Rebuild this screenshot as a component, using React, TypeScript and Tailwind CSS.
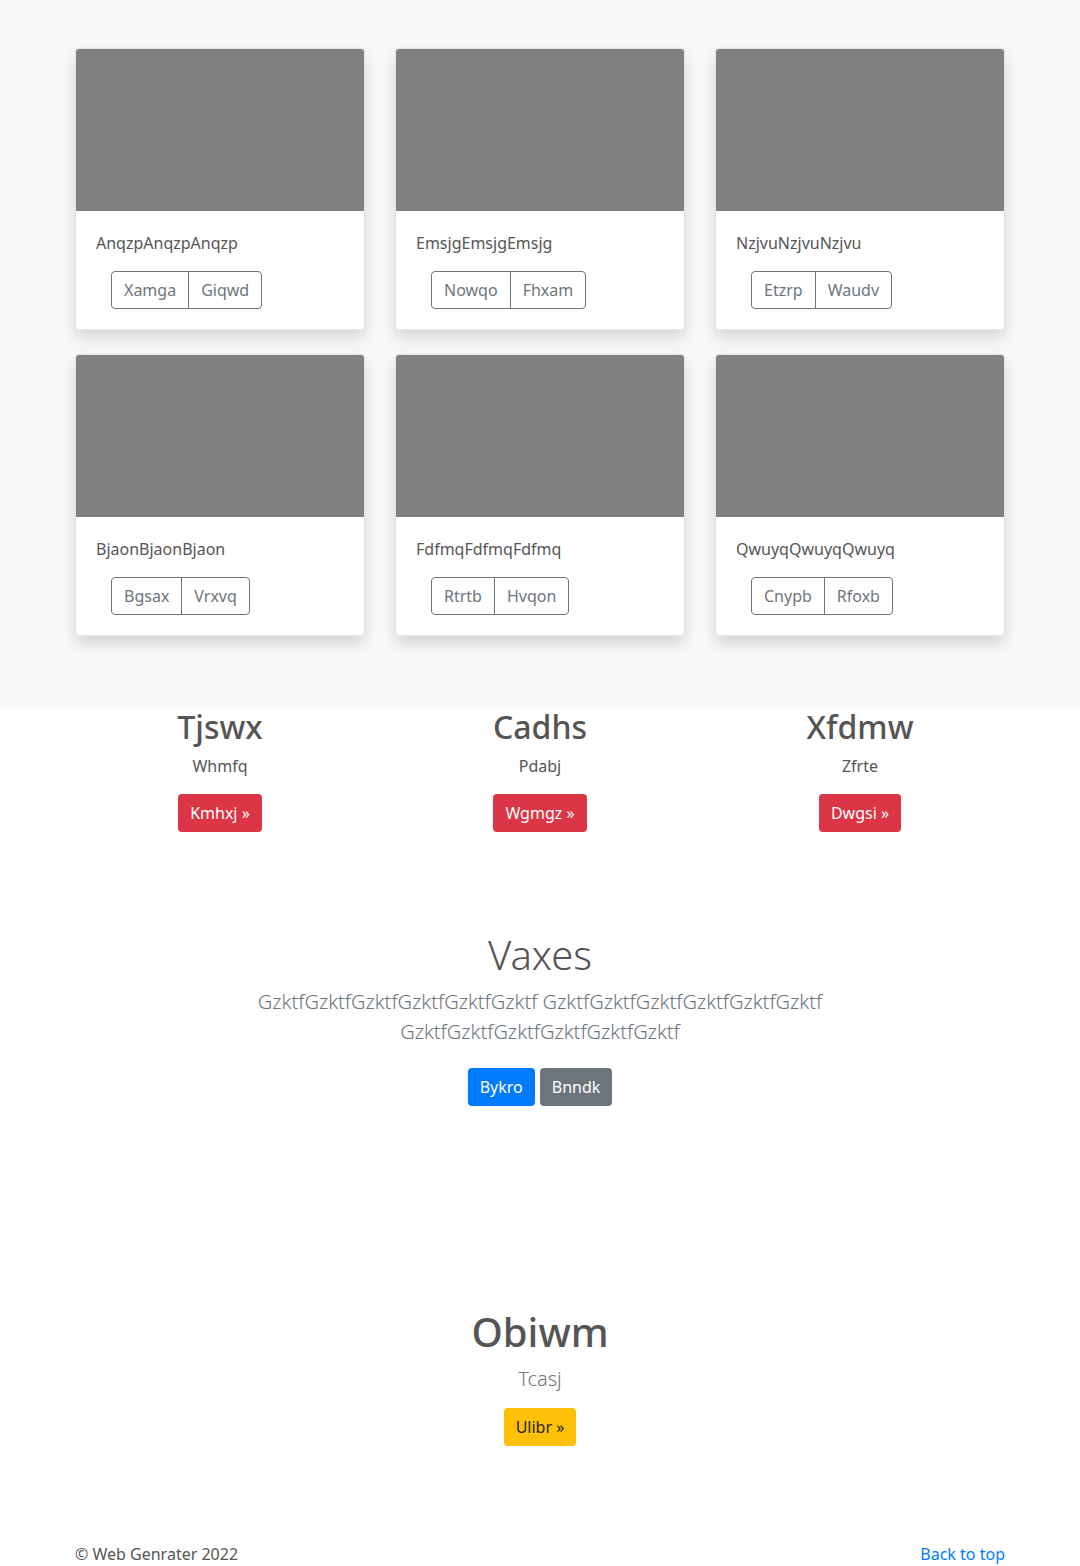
const CARDS = [
  { title: 'AnqzpAnqzpAnqzp', actions: ['Xamga', 'Giqwd'] },
  { title: 'EmsjgEmsjgEmsjg', actions: ['Nowqo', 'Fhxam'] },
  { title: 'NzjvuNzjvuNzjvu', actions: ['Etzrp', 'Waudv'] },
  { title: 'BjaonBjaonBjaon', actions: ['Bgsax', 'Vrxvq'] },
  { title: 'FdfmqFdfmqFdfmq', actions: ['Rtrtb', 'Hvqon'] },
  { title: 'QwuyqQwuyqQwuyq', actions: ['Cnypb', 'Rfoxb'] },
];

const FEATURES = [
  { title: 'Tjswx', text: 'Whmfq', cta: 'Kmhxj' },
  { title: 'Cadhs', text: 'Pdabj', cta: 'Wgmgz' },
  { title: 'Xfdmw', text: 'Zfrte', cta: 'Dwgsi' },
];

function AlbumCard({ title, actions }: { title: string; actions: string[] }) {
  return (
    <div className="overflow-hidden rounded border border-black/10 bg-white shadow-[0_8px_16px_rgba(0,0,0,0.15)]">
      <div className="h-[162px] bg-[#808080]" />
      <div className="p-5">
        <p className="mb-4 leading-6 text-[#555]">{title}</p>
        <div className="ml-[15px] inline-flex">
          {actions.map((label, i) => (
            <button
              key={label}
              type="button"
              className={
                i === 0
                  ? 'h-[38px] rounded-l border border-[#6c757d] px-3 text-[#6c757d]'
                  : '-ml-px h-[38px] rounded-r border border-[#6c757d] px-3 text-[#6c757d]'
              }
            >
              {label}
            </button>
          ))}
        </div>
      </div>
    </div>
  );
}

export default function App() {
  return (
    <div className="h-[1566px] overflow-hidden bg-white font-['Noto_Sans',sans-serif] text-base text-[#555]">
      <section className="bg-[#f8f9fa] pt-12 pb-[72px]">
        <div className="mx-auto grid w-[930px] grid-cols-3 gap-x-[30px] gap-y-6">
          {CARDS.map((card) => (
            <AlbumCard key={card.title} {...card} />
          ))}
        </div>
      </section>

      <section className="mx-auto grid w-[960px] grid-cols-3 text-center">
        {FEATURES.map((f) => (
          <div key={f.title} className="flex flex-col items-center">
            <h2 className="mb-2 text-[32px] leading-[38px] font-medium text-[#555]">{f.title}</h2>
            <p className="mb-4 leading-6 text-[#555]">{f.text}</p>
            <button type="button" className="h-[38px] rounded bg-[#dc3545] px-3 text-white">
              {f.cta} »
            </button>
          </div>
        ))}
      </section>

      <section className="mt-[99px] flex flex-col items-center text-center">
        <h1 className="mb-2 text-[40px] leading-[48px] font-light text-[#555]">Vaxes</h1>
        <p className="w-[620px] text-xl leading-[30px] font-light text-[#6c757d]">
          GzktfGzktfGzktfGzktfGzktfGzktf GzktfGzktfGzktfGzktfGzktfGzktf GzktfGzktfGzktfGzktfGzktfGzktf
        </p>
        <div className="mt-[21px] flex gap-[5px]">
          <button type="button" className="h-[38px] rounded bg-[#007bff] px-3 text-white">
            Bykro
          </button>
          <button type="button" className="h-[38px] rounded bg-[#6c757d] px-3 text-white">
            Bnndk
          </button>
        </div>
      </section>

      <section className="mt-[202px] flex flex-col items-center text-center">
        <h1 className="mb-2 text-[40px] leading-[48px] font-medium text-[#555]">Obiwm</h1>
        <p className="mb-[14px] text-xl leading-[30px] font-light text-[#6c757d]">Tcasj</p>
        <button type="button" className="h-[38px] rounded bg-[#ffc107] px-3 text-[#212529]">
          Ulibr »
        </button>
      </section>

      <footer className="mx-auto mt-24 flex w-[930px] justify-between leading-6">
        <p className="text-[#555]">© Web Genrater 2022</p>
        <a href="#" className="text-[#007bff]">
          Back to top
        </a>
      </footer>
    </div>
  );
}
